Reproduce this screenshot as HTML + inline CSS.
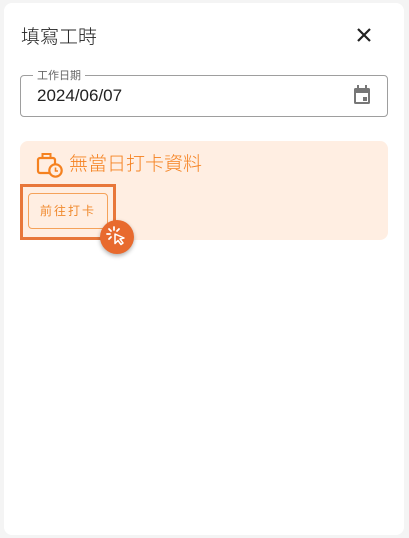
<!DOCTYPE html>
<html><head><meta charset="utf-8"><style>
body{margin:0;width:409px;height:538px;background:#f4f4f4;font-family:"Liberation Sans","Noto Sans CJK TC",sans-serif;position:relative;overflow:hidden}
.card{position:absolute;left:4px;top:3px;width:400px;height:532px;background:#fff;border-radius:8px}
.t{position:absolute;left:21px;top:22px;font-size:19px;color:#222;font-weight:300}
.x{position:absolute;left:355px;top:26px}
.field{position:absolute;left:20px;top:75px;width:366px;height:40px;border:1px solid #9e9e9e;border-radius:4px}
.lab{position:absolute;left:33px;top:67px;background:#fff;padding:0 4px;font-size:11px;color:#666}
.val{position:absolute;left:37px;top:86px;font-size:17px;color:#222}
.cal{position:absolute;left:353px;top:85px}
.box{position:absolute;left:20px;top:141px;width:368px;height:99px;background:#ffeee2;border-radius:8px}
.bt{position:absolute;left:69px;top:149px;font-size:19px;color:#f5811f;font-weight:300}
.hl{position:absolute;left:20px;top:184px;width:90px;height:50px;border:3px solid #e8773a}
.btn{position:absolute;left:28px;top:193px;width:78px;height:34px;border:1px solid #f5a25a;border-radius:4px;font-size:12px;color:#f08a2e;text-align:center;line-height:34px;letter-spacing:2px}
.dot{position:absolute;left:100px;top:220px;width:34px;height:34px;border-radius:50%;background:#e86a2e;box-shadow:0 2px 4px rgba(0,0,0,.3)}
</style></head><body>
<div class="card"></div>
<div class="t">填寫工時</div>
<svg class="x" width="18" height="18" viewBox="0 0 18 18"><path d="M3 3L15 15M15 3L3 15" stroke="#222" stroke-width="2.2"/></svg>
<div class="field"></div>
<div class="lab">工作日期</div>
<div class="val">2024/06/07</div>
<svg class="cal" width="18" height="20" viewBox="0 0 18 20"><rect x="1" y="3" width="16" height="16" rx="1.5" fill="#777"/><rect x="3" y="8" width="12" height="9" fill="#fff"/><rect x="4" y="0" width="2" height="4" fill="#777"/><rect x="12" y="0" width="2" height="4" fill="#777"/><rect x="10" y="12" width="4" height="4" fill="#777"/></svg>
<div class="box"></div>
<svg style="position:absolute;left:36px;top:152px" width="28" height="26" viewBox="0 0 28 26"><rect x="2" y="6" width="17" height="15" rx="2" fill="none" stroke="#f5811f" stroke-width="2.2"/><rect x="6.5" y="2" width="8" height="4" fill="none" stroke="#f5811f" stroke-width="2"/><circle cx="19.5" cy="18.5" r="6.2" fill="#ffeee2" stroke="#f5811f" stroke-width="2.2"/><path d="M19.5 15.5v3.5h2.5" stroke="#f5811f" stroke-width="1.6" fill="none"/></svg>
<div class="bt">無當日打卡資料</div>
<div class="hl"></div>
<div class="btn">前往打卡</div>
<div class="dot"></div>
<svg style="position:absolute;left:100px;top:220px" width="34" height="34" viewBox="0 0 34 34"><g stroke="#fff" stroke-width="1.8" stroke-linecap="round"><path d="M14 7v3M7 14h3M9 9l2 2M19 9l-2 2M9 19l2-2"/></g><path d="M15 14l9 4-4 1 3 4-2 1.5-3-4-3 3z" fill="#e86a2e" stroke="#fff" stroke-width="1.5" stroke-linejoin="round"/></svg>
</body></html>
